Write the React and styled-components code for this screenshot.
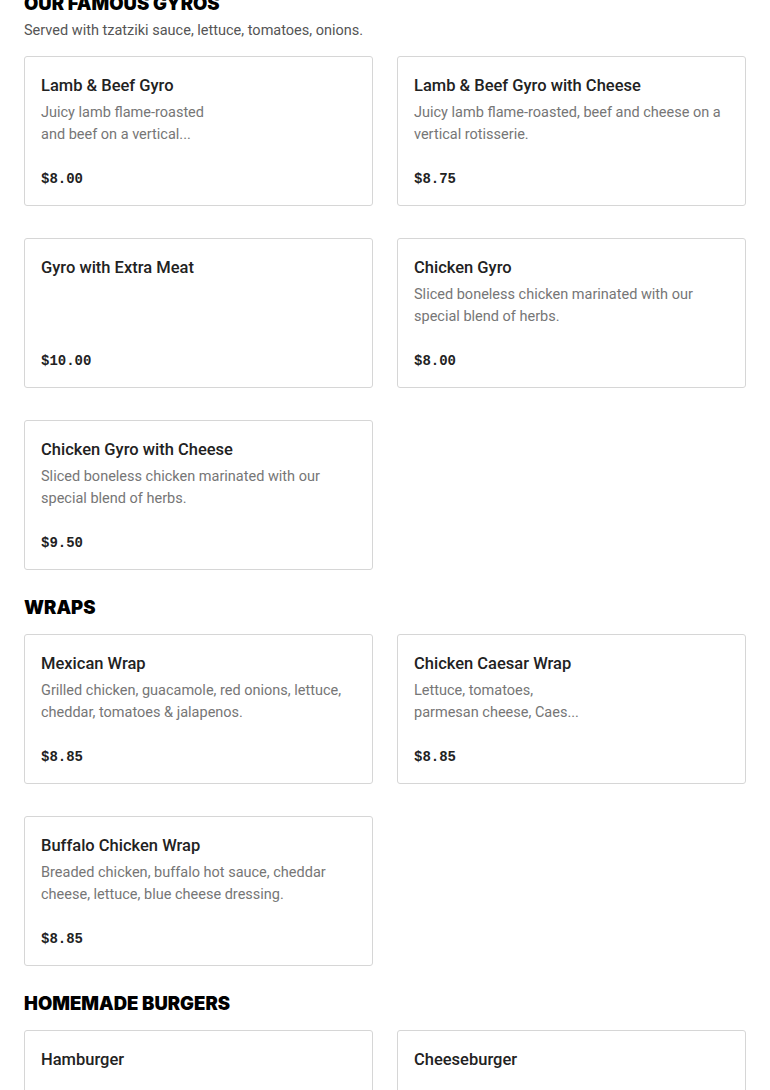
import React from "react";
import styled, { createGlobalStyle } from "styled-components";

const Global = createGlobalStyle`
  html, body { margin: 0; padding: 0; background: #fff; }
  body { font-family: Roboto, "Liberation Sans", Arial, sans-serif; color: #222; }
  * { box-sizing: border-box; }
`;

const Page = styled.main`
  margin-top: -9px;
  padding: 0 24px 40px;
  display: flex;
  flex-direction: column;
  gap: 25px;
`;

const Section = styled.section`
  display: flex;
  flex-direction: column;
`;

const SectionHeader = styled.header`
  display: flex;
  flex-direction: column;
  gap: 6px;
  margin-bottom: 15px;
`;

const SectionTitle = styled.h2`
  margin: 0;
  font-family: Inter, "Liberation Sans", Arial, sans-serif;
  font-size: 18.5px;
  line-height: 24px;
  font-weight: 900;
  color: #000;
  text-transform: uppercase;
`;

const SectionNote = styled.p`
  margin: 0;
  font-size: 14.5px;
  line-height: 20px;
  color: #555;
`;

const Grid = styled.div`
  display: grid;
  grid-template-columns: 1fr 1fr;
  column-gap: 24px;
  row-gap: 32px;
`;

const Card = styled.article`
  height: 150px;
  border: 1px solid #d6d6d6;
  border-radius: 3px;
  padding: 17px 16px 16px;
  display: flex;
  flex-direction: column;
  background: #fff;
`;

const ItemName = styled.h3`
  margin: 0;
  font-size: 16.5px;
  line-height: 24px;
  font-weight: 500;
  color: #222;
`;

const ItemDesc = styled.p`
  margin: 4px 0 0;
  font-size: 14.5px;
  line-height: 22px;
  color: #767676;
  max-width: ${(p) => (p.$narrow ? "172px" : "none")};
`;

const Price = styled.span`
  margin-top: auto;
  font-family: "Liberation Mono", "DejaVu Sans Mono", monospace;
  font-weight: 700;
  font-size: 14px;
  line-height: 20px;
  color: #222;
`;

const menu = [
  {
    title: "Our Famous Gyros",
    note: "Served with tzatziki sauce, lettuce, tomatoes, onions.",
    items: [
      { name: "Lamb & Beef Gyro", desc: "Juicy lamb flame-roasted and beef on a vertical...", narrow: true, price: "$8.00" },
      { name: "Lamb & Beef Gyro with Cheese", desc: "Juicy lamb flame-roasted, beef and cheese on a vertical rotisserie.", price: "$8.75" },
      { name: "Gyro with Extra Meat", price: "$10.00" },
      { name: "Chicken Gyro", desc: "Sliced boneless chicken marinated with our special blend of herbs.", price: "$8.00" },
      { name: "Chicken Gyro with Cheese", desc: "Sliced boneless chicken marinated with our special blend of herbs.", price: "$9.50" },
    ],
  },
  {
    title: "Wraps",
    items: [
      { name: "Mexican Wrap", desc: "Grilled chicken, guacamole, red onions, lettuce, cheddar, tomatoes & jalapenos.", price: "$8.85" },
      { name: "Chicken Caesar Wrap", desc: "Lettuce, tomatoes, parmesan cheese, Caes...", narrow: true, price: "$8.85" },
      { name: "Buffalo Chicken Wrap", desc: "Breaded chicken, buffalo hot sauce, cheddar cheese, lettuce, blue cheese dressing.", price: "$8.85" },
    ],
  },
  {
    title: "Homemade Burgers",
    items: [
      { name: "Hamburger", price: "$7.50" },
      { name: "Cheeseburger", price: "$8.00" },
    ],
  },
];

export default function App() {
  return (
    <>
      <Global />
      <Page>
        {menu.map((s) => (
          <Section key={s.title}>
            <SectionHeader>
              <SectionTitle>{s.title}</SectionTitle>
              {s.note && <SectionNote>{s.note}</SectionNote>}
            </SectionHeader>
            <Grid>
              {s.items.map((it) => (
                <Card key={it.name}>
                  <ItemName>{it.name}</ItemName>
                  {it.desc && <ItemDesc $narrow={it.narrow}>{it.desc}</ItemDesc>}
                  <Price>{it.price}</Price>
                </Card>
              ))}
            </Grid>
          </Section>
        ))}
      </Page>
    </>
  );
}
